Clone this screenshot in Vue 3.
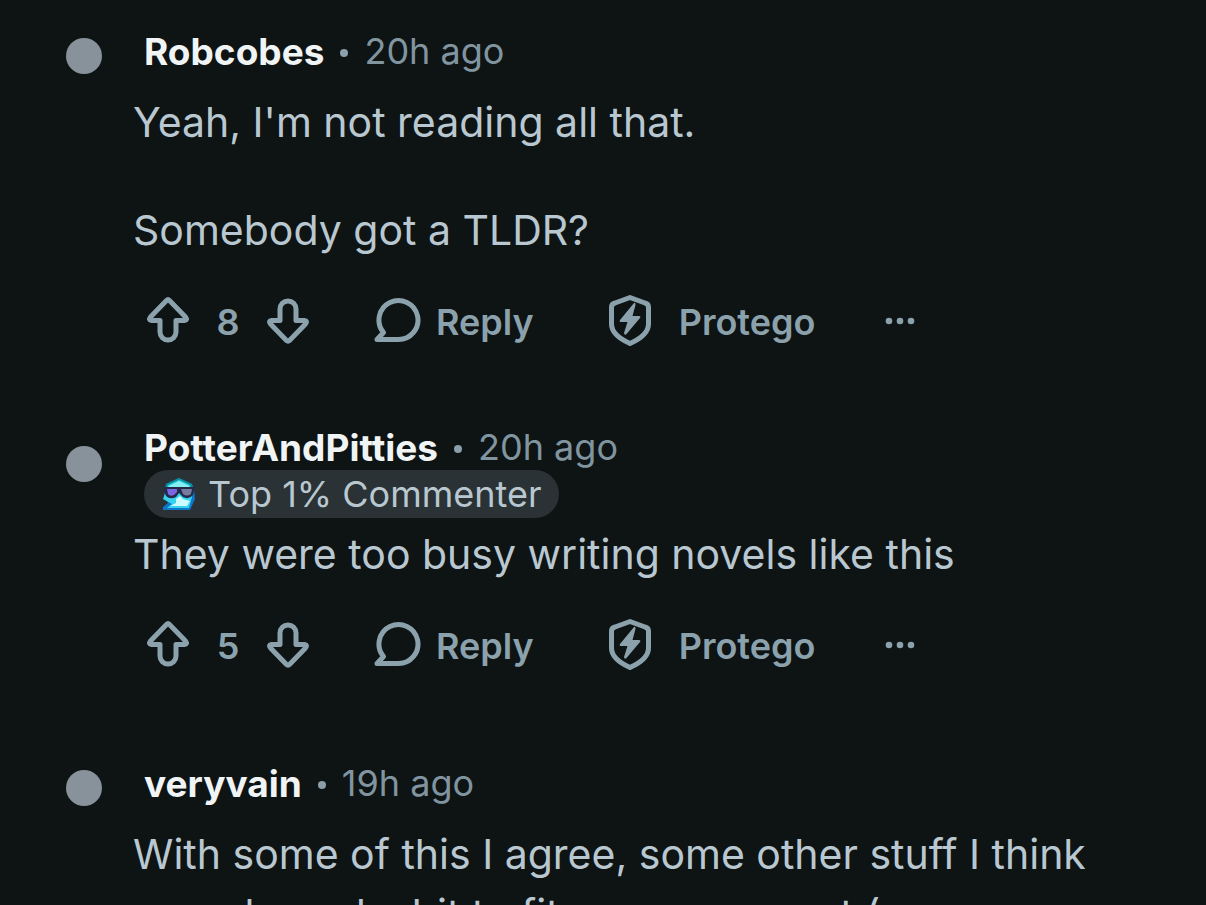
<template>
  <main class="thread">
    <article
      v-for="comment in comments"
      :key="comment.author"
      class="comment"
      :class="{ 'has-badge': comment.badge }"
    >
      <span class="avatar"></span>
      <div class="content">
        <header class="meta">
          <div class="byline">
            <a href="#" class="author">{{ comment.author }}</a>
            <span class="dot"></span>
            <time class="age">{{ comment.age }}</time>
          </div>
          <div v-if="comment.badge" class="badge">
            <svg class="badge-icon" viewBox="0 0 34 34" aria-hidden="true">
              <path d="M17 1 L30 7 L32 12 L33 22 L28 33 H1 L1 30 L6 26 L2 20 L4 7 Z" fill="#0d76c8" />
              <path d="M17 1 L30 7 L31 14 H3 L4 7 Z" fill="#0b8f98" />
              <path d="M17 3 L28 8 L30 20 L27 31 H5 L10 27 L1 22 L6 8 Z" fill="#35d3ee" />
              <path d="M17 4 L27 9 L28 12 H6 L7 9 Z" fill="#86f0f0" />
              <path d="M14 22 L18 19 L21 22 L28 24 L25 29 H8 L14 26 Z" fill="#cbfaff" />
              <path d="M2 10 H32 V14 L31 18 Q27 23 21 20 L17 16 L14 20 Q8 23 4 19 L2 14 Z" fill="#25294a" />
              <path d="M5 12 H15 V15 L12 18 Q8 20 6 17 Z" fill="#7a68e2" />
              <path d="M19 12 H30 L29 17 Q25 20 21 17 Z" fill="#777b9f" />
            </svg>
            <span>{{ comment.badge }}</span>
          </div>
        </header>

        <div class="body">
          <p v-for="line in comment.text" :key="line">{{ line }}</p>
        </div>

        <footer v-if="comment.votes" class="actions">
          <button type="button" class="vote" aria-label="Upvote">
            <svg width="44" height="48" viewBox="0 0 44 48">
              <path d="M20.500 3.500 Q22 2 23.500 3.500 L39.500 20 Q42 23 38.500 23.500 H30 V35 A8 8 0 0 1 14 35 V23.500 H5.500 Q2 23 4.500 20 Z" />
            </svg>
          </button>
          <span class="count">{{ comment.votes }}</span>
          <button type="button" class="vote" aria-label="Downvote">
            <svg width="44" height="48" viewBox="0 0 44 48">
              <path d="M20.500 43.500 Q22 45 23.500 43.500 L39.500 27 Q42 24 38.500 23.500 H30 V12 A8 8 0 0 0 14 12 V23.500 H5.500 Q2 24 4.500 27 Z" />
            </svg>
          </button>
          <button type="button" class="action reply">
            <svg width="48" height="48" viewBox="0 0 48 48">
              <path d="M24 42.500 H3 L9.500 35.500 A19.500 19.500 0 1 1 24 42.500 Z" />
            </svg>
            <span>Reply</span>
          </button>
          <button type="button" class="action protego">
            <svg width="46" height="54" viewBox="0 0 46 54">
              <path d="M23 3.500 L38 9 Q41.500 10 41.500 13 V30 C41.500 39 33 45 23 49.500 C13 45 4.500 39 4.500 30 V13 Q4.500 10 8 9 Z" />
              <path class="bolt" d="M27 9 L13 26 Q12 28 14 28 H20.500 L17 39 Q17.500 42 19.500 40 L33 24 Q34 22 32 22 H25.500 L28.500 11 Q28.500 8 27 9 Z" />
            </svg>
            <span>Protego</span>
          </button>
          <button type="button" class="more" aria-label="More options">
            <svg width="30" height="8" viewBox="0 0 30 8">
              <circle cx="4" cy="4" r="3.300" />
              <circle cx="15" cy="4" r="3.300" />
              <circle cx="26" cy="4" r="3.300" />
            </svg>
          </button>
        </footer>
      </div>
    </article>
  </main>
</template>

<script setup>
const comments = [
  {
    author: 'Robcobes',
    age: '20h ago',
    text: ["Yeah, I'm not reading all that.", 'Somebody got a TLDR?'],
    votes: 8
  },
  {
    author: 'PotterAndPitties',
    age: '20h ago',
    badge: 'Top 1% Commenter',
    text: ['They were too busy writing novels like this'],
    votes: 5
  },
  {
    author: 'veryvain',
    age: '19h ago',
    text: ['With some of this I agree, some other stuff I think was shaped a bit to fit your argument (']
  }
]
</script>

<style>
body {
  margin: 0;
  background: #0e1314;
}
</style>

<style scoped>
.thread {
  height: 100vh;
  overflow: hidden;
  background: #0e1314;
  color: #b9c8d0;
  font-family: Inter, "Liberation Sans", sans-serif;
}

.comment {
  display: flex;
  padding: 28px 80px 60px 66px;
}

.comment.has-badge {
  padding-top: 16px;
}

.avatar {
  flex: none;
  width: 36px;
  height: 36px;
  margin: 10px 31px 0 0;
  border-radius: 50%;
  background: #88929a;
}

.has-badge .avatar {
  margin-top: 22px;
}

.content {
  flex: 1;
  min-width: 0;
}

.meta {
  display: flex;
  flex-direction: column;
  align-items: flex-start;
  padding-left: 11px;
}

.byline {
  display: flex;
  align-items: center;
  height: 46px;
  font-size: 36px;
}

.author {
  color: #f0f4f5;
  font-size: 37px;
  font-weight: 700;
  text-decoration: none;
}

.dot {
  width: 8px;
  height: 8px;
  margin: 4px 16px 0;
  border-radius: 50%;
  background: #8ba0aa;
}

.age {
  color: #8095a0;
}

.badge {
  display: flex;
  align-items: center;
  gap: 12px;
  height: 48px;
  padding: 0 18px;
  border-radius: 24px;
  background: #2a3236;
  font-size: 36px;
}

.badge-icon {
  width: 34px;
  height: 34px;
}

.body {
  padding-top: 18px;
  font-size: 41px;
  line-height: 60px;
}

.has-badge .body {
  padding-top: 6px;
}

.body p {
  margin: 0;
}

.body p + p {
  margin-top: 48px;
}

.actions {
  display: flex;
  align-items: center;
  height: 54px;
  margin-top: 34px;
  padding-left: 13px;
  color: #8ba2ad;
  font-size: 36px;
  font-weight: 600;
}

.actions button {
  display: flex;
  align-items: center;
  padding: 0;
  border: 0;
  background: none;
  color: inherit;
  font: inherit;
  cursor: pointer;
}

.actions span {
  padding-top: 1px;
}

.actions svg {
  flex: none;
  fill: none;
  stroke: currentColor;
  stroke-width: 5;
  stroke-linejoin: round;
}

.actions .bolt,
.actions .more svg {
  fill: currentColor;
  stroke: none;
}

.count {
  width: 76px;
  text-align: center;
}

.actions .reply {
  gap: 14px;
  margin-left: 64px;
}

.actions .protego {
  gap: 26px;
  margin-left: 73px;
}

.actions .more {
  margin-left: 70px;
}
</style>
